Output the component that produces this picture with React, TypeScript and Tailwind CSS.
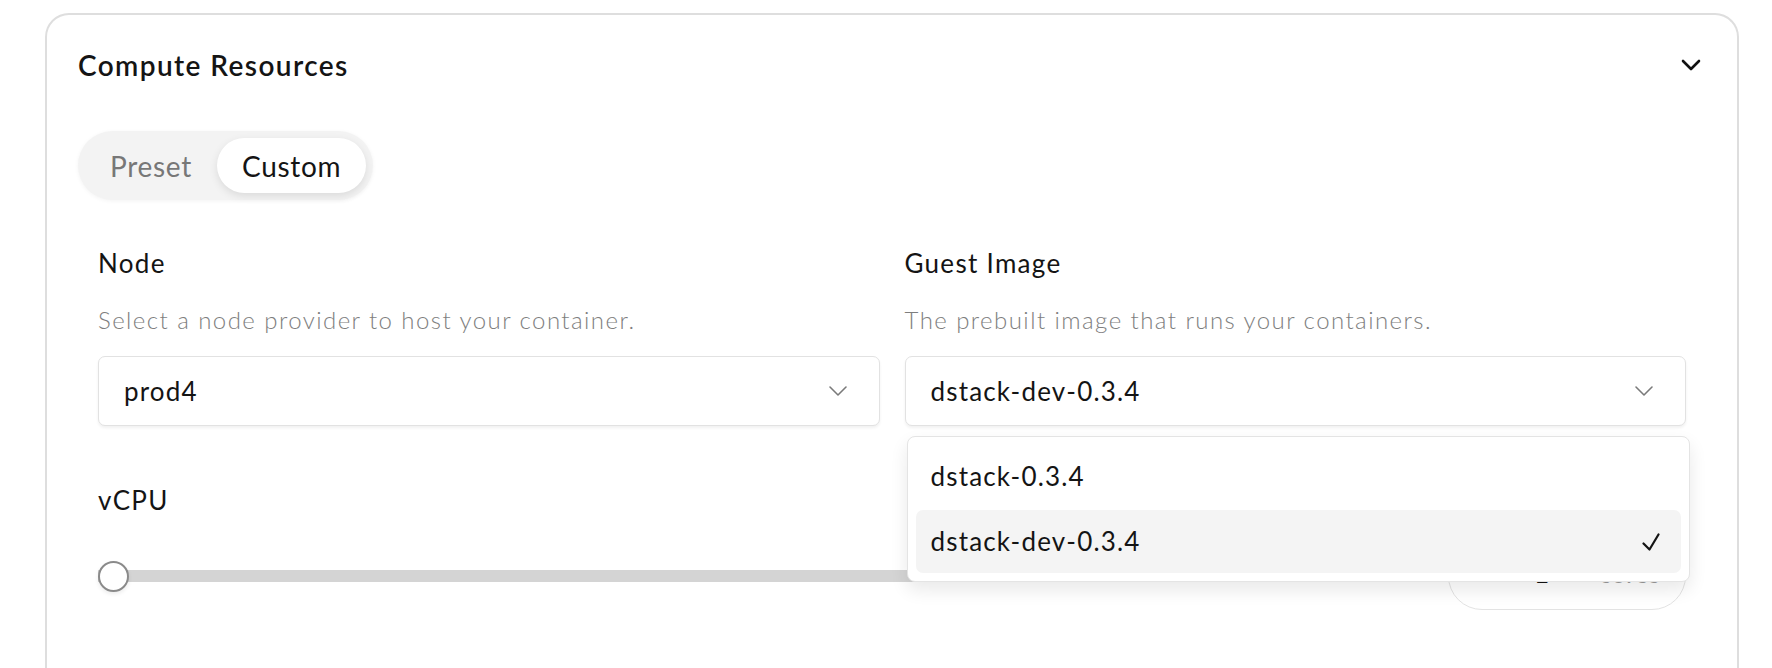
import React from "react";

function Chevron({ className }: { className?: string }) {
  return (
    <svg
      className={className}
      viewBox="0 0 20 12"
      fill="none"
      stroke="currentColor"
      strokeLinecap="round"
      strokeLinejoin="round"
    >
      <path d="M2 2l8 8 8-8" />
    </svg>
  );
}

function Check() {
  return (
    <svg
      className="w-[18px] h-[18px]"
      viewBox="0 0 18 18"
      fill="none"
      stroke="currentColor"
      strokeWidth={2.2}
      strokeLinecap="round"
      strokeLinejoin="round"
    >
      <path d="M1.5 10.5l6 6L16.5 1.5" />
    </svg>
  );
}

function Field({
  label,
  hint,
  value,
  children,
}: {
  label: string;
  hint: string;
  value: string;
  children?: React.ReactNode;
}) {
  return (
    <div className="flex flex-col">
      <div className="text-[26px] leading-[32px] tracking-[0.05em]">{label}</div>
      <div className="mt-[25px] text-[24px] leading-[32px] font-light text-[#7e7e7e] tracking-[0.06em]">
        {hint}
      </div>
      <div className="relative mt-[20px]">
        <div className="h-[70px] rounded-[7px] border border-[#e2e2e2] shadow-[0_2px_3px_rgba(0,0,0,0.06)] bg-white flex items-center justify-between pl-[25px] pr-[31px]">
          <span className="text-[26px] tracking-[0.045em]">{value}</span>
          <Chevron className="w-[20px] h-[12px] text-[#7a7a7a] [stroke-width:1.6]" />
        </div>
        {children}
      </div>
    </div>
  );
}

export default function App() {
  const images = ["dstack-0.3.4", "dstack-dev-0.3.4"];
  const selected = "dstack-dev-0.3.4";

  return (
    <div className="h-screen overflow-hidden bg-white font-['Lato',sans-serif] text-[#141414]">
      <div className="ml-[45px] mt-[13px] w-[1694px] h-[700px] rounded-t-[24px] border-2 border-b-0 border-[#dedede] px-[31px] pt-[33px]">
        {/* header */}
        <div className="flex items-center justify-between h-[34px]">
          <h2 className="text-[28px] font-semibold tracking-[0.05em] leading-[34px]">
            Compute Resources
          </h2>
          <Chevron className="w-[20px] h-[12px] mr-[5px] text-[#111] [stroke-width:2.6]" />
        </div>

        {/* preset / custom toggle */}
        <div className="mt-[49px] inline-flex items-center p-[7px] rounded-full bg-[#f3f3f3] shadow-[0_1px_4px_rgba(0,0,0,0.05)]">
          <button className="h-[55px] px-[25px] rounded-full text-[28px] text-[#777] tracking-[0.025em]">
            Preset
          </button>
          <button className="h-[55px] px-[25px] rounded-full bg-white text-[28px] text-[#141414] tracking-[0.025em] shadow-[0_3px_8px_rgba(0,0,0,0.1)]">
            Custom
          </button>
        </div>

        <div className="px-[20px] mt-[47px]">
          <div className="grid grid-cols-2 gap-x-[25px]">
            <Field
              label="Node"
              hint="Select a node provider to host your container."
              value="prod4"
            />
            <Field
              label="Guest Image"
              hint="The prebuilt image that runs your containers."
              value={selected}
            >
              <div className="absolute z-10 top-[calc(100%+10px)] left-[2px] w-[783px] rounded-[8px] border border-[#e4e4e4] bg-white shadow-[0_8px_18px_rgba(0,0,0,0.09)] p-[8px] flex flex-col gap-[2px]">
                {images.map((img) => (
                  <div
                    key={img}
                    className={`h-[63px] rounded-[7px] pl-[15px] pr-[21px] flex items-center justify-between text-[26px] tracking-[0.045em] ${
                      img === selected ? "bg-[#f4f4f4]" : ""
                    }`}
                  >
                    <span>{img}</span>
                    {img === selected && <Check />}
                  </div>
                ))}
              </div>
            </Field>
          </div>

          {/* vCPU */}
          <div className="mt-[58px] text-[26px] leading-[32px] tracking-[0.05em]">vCPU</div>
          <div className="mt-[26px] flex items-center gap-[28px]">
            <div className="relative flex-1 h-[31px] flex items-center">
              <div className="w-full h-[12px] bg-[#d4d4d4]" />
              <div className="absolute left-0 top-0 w-[31px] h-[31px] rounded-full bg-white border-2 border-[#8a8a8a] shadow-[0_2px_4px_rgba(0,0,0,0.08)]" />
            </div>
            <div className="w-[238px] h-[68px] rounded-full border-[1.5px] border-[#e3e3e3] flex items-center pl-[85px] pb-[5px]">
              <span className="text-[26px] font-semibold">1</span>
              <span className="ml-[50px] text-[26px] text-[#9a9a9a]">cores</span>
            </div>
          </div>
        </div>
      </div>
    </div>
  );
}
